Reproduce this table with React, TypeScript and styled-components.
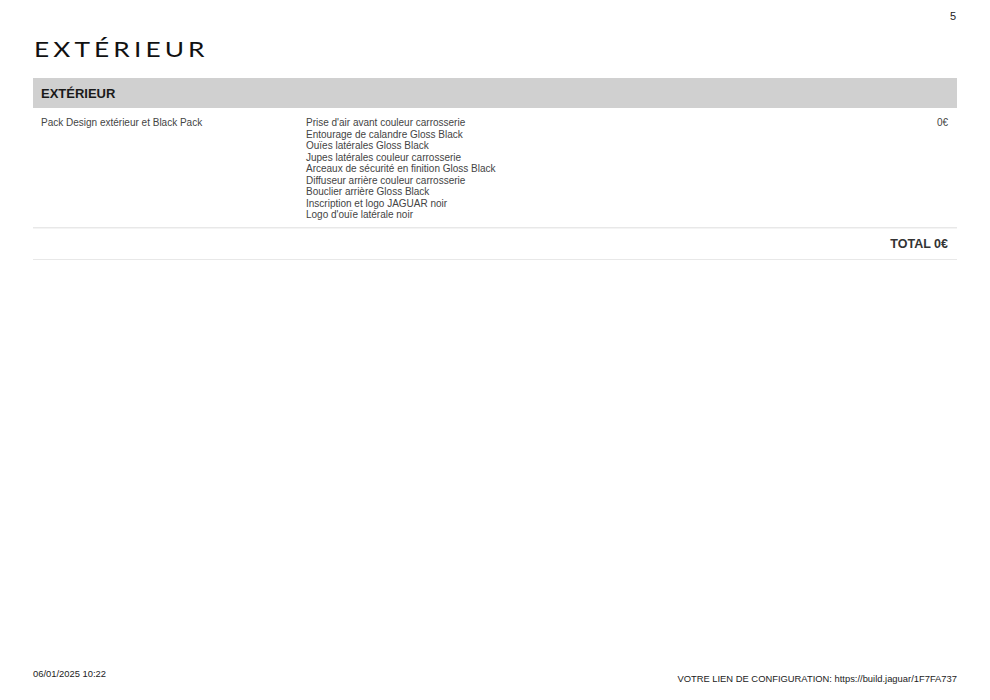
import React from "react";
import styled, { createGlobalStyle } from "styled-components";

const Global = createGlobalStyle`
  html, body { margin: 0; padding: 0; background: #fff; overflow: hidden; }
  body { font-family: "Liberation Sans", Arial, sans-serif; color: #333; }
`;

const Page = styled.div`
  width: 990px;
  height: 700px;
  box-sizing: border-box;
  padding: 0 33px;
  display: flex;
  flex-direction: column;
`;

const PageNum = styled.div`
  align-self: flex-end;
  margin-top: 10px;
  margin-right: 1px;
  font-size: 11px;
  line-height: 13px;
  color: #222;
`;

const Title = styled.h1`
  align-self: flex-start;
  margin: 14px 0 0 1px;
  font-family: "Lato", "DejaVu Sans", sans-serif;
  font-weight: 400;
  font-size: 21px;
  line-height: 24px;
  letter-spacing: 3.3px;
  color: #111;
  transform: scaleX(1.25);
  transform-origin: left center;
  white-space: nowrap;
`;

const Section = styled.div`
  margin-top: 17px;
  display: flex;
  flex-direction: column;
`;

const SectionHead = styled.div`
  height: 30px;
  background: #d0d0d0;
  display: flex;
  align-items: center;
  padding: 0 8px;
  font-weight: 700;
  font-size: 13px;
  color: #1a1a1a;
`;

const Row = styled.div`
  display: grid;
  grid-template-columns: 265px 1fr auto;
  padding: 9px 9px 6px 8px;
  font-size: 10px;
  line-height: 11.5px;
  color: #444;
  border-bottom: 1px solid #e8e8e8;
  box-shadow: 0 1px 0 #f4f4f4;
`;

const Lines = styled.div`
  display: flex;
  flex-direction: column;
`;

const TotalRow = styled.div`
  display: flex;
  justify-content: flex-end;
  align-items: center;
  height: 30px;
  margin-top: 1px;
  padding: 0 9px;
  font-weight: 700;
  font-size: 12.5px;
  color: #333;
  border-bottom: 1px solid #e8e8e8;
`;

const Footer = styled.div`
  margin-top: auto;
  margin-bottom: 16px;
  display: flex;
  justify-content: space-between;
  align-items: flex-start;
  font-size: 9.4px;
  color: #222;
`;

const FooterRight = styled.div`
  margin-top: 5px;
`;

const items = [
  "Prise d'air avant couleur carrosserie",
  "Entourage de calandre Gloss Black",
  "Ouïes latérales Gloss Black",
  "Jupes latérales couleur carrosserie",
  "Arceaux de sécurité en finition Gloss Black",
  "Diffuseur arrière couleur carrosserie",
  "Bouclier arrière Gloss Black",
  "Inscription et logo JAGUAR noir",
  "Logo d'ouïe latérale noir",
];

export default function App() {
  return (
    <>
      <Global />
      <Page>
        <PageNum>5</PageNum>
        <Title>EXTÉRIEUR</Title>
        <Section>
          <SectionHead>EXTÉRIEUR</SectionHead>
          <Row>
            <div>Pack Design extérieur et Black Pack</div>
            <Lines>
              {items.map((t) => (
                <span key={t}>{t}</span>
              ))}
            </Lines>
            <div>0€</div>
          </Row>
          <TotalRow>TOTAL 0€</TotalRow>
        </Section>
        <Footer>
          <div>06/01/2025 10:22</div>
          <FooterRight>VOTRE LIEN DE CONFIGURATION: https://build.jaguar/1F7FA737</FooterRight>
        </Footer>
      </Page>
    </>
  );
}
